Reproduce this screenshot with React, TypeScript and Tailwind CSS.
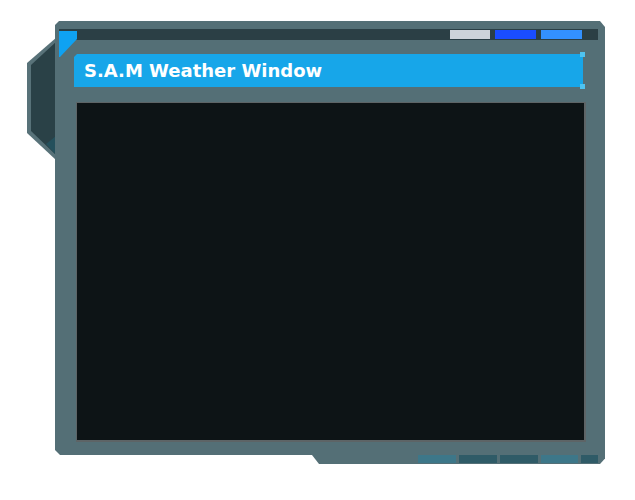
export default function App() {
  const slots = [
    { w: "w-[38px]", c: "bg-[#3d7789]" },
    { w: "w-[38px]", c: "bg-[#2f5b67]" },
    { w: "w-[38px]", c: "bg-[#2f5b67]" },
    { w: "w-[37px]", c: "bg-[#3d7789]" },
    { w: "w-[17px]", c: "bg-[#2f5b67]" },
  ]

  return (
    <div className="relative w-[635px] h-[500px] bg-white overflow-hidden">
      {/* Side hexagon */}
      <svg className="absolute left-[26px] top-[36px]" width="34" height="128" viewBox="0 0 34 128">
        <polygon points="31,1 1,27 1,97 30,124 34,124 34,1" fill="#587279" />
        <polygon points="31,5 5,29 5,95 30,119 34,119 34,5" fill="#2a4147" />
        <polygon points="20,108 30,100 30,119" fill="#24505c" />
      </svg>

      {/* Bottom tab */}
      <div className="absolute left-[312px] top-[450px] w-[293px] h-[14px] bg-[#546f76] [clip-path:polygon(0_0,100%_0,100%_60%,calc(100%-5px)_100%,7px_100%,0_35%)] flex justify-end gap-[3px] pt-[5px] pr-[7px]">
        {slots.map((s, i) => (
          <div key={i} className={`${s.w} h-[8px] ${s.c}`} />
        ))}
      </div>

      {/* Main frame */}
      <div className="relative ml-[55px] mt-[21px] w-[550px] h-[434px] bg-[#546f76] [clip-path:polygon(4px_0,calc(100%-5px)_0,100%_6px,100%_100%,5px_100%,0_calc(100%-5px),0_4px)] flex flex-col">
        {/* Top strip */}
        <div className="mt-[8px] ml-[4px] mr-[7px] h-[11px] bg-[#2b3f45] flex justify-end gap-[5px] py-[1px] pr-[16px]">
          <div className="w-[40px] bg-[#cdd3d9]" />
          <div className="w-[41px] bg-[#1a4dff]" />
          <div className="w-[41px] bg-[#3391ff]" />
        </div>

        {/* Blue corner mark */}
        <svg className="absolute left-[4px] top-[10px]" width="20" height="27" viewBox="0 0 20 27">
          <polygon points="0,0 18,0 18,8 1,26 0,26" fill="#0fa2f2" />
        </svg>

        {/* Title bar */}
        <div className="relative mt-[14px] ml-[19px] w-[509px] h-[33px] bg-[#17a6e9] [clip-path:polygon(3px_0,100%_0,100%_100%,0_100%,0_3px)] flex items-center pl-[10px]">
          <span className="text-white text-[18px] font-bold leading-none font-['DejaVu_Sans',sans-serif]">
            S.A.M Weather Window
          </span>
        </div>
        <div className="absolute left-[525px] top-[31px] w-[5px] h-[5px] bg-[#4fc3f0]" />
        <div className="absolute left-[525px] top-[63px] w-[5px] h-[5px] bg-[#4fc3f0]" />

        {/* Content area */}
        <div className="mt-[15px] ml-[21px] w-[510px] h-[340px] bg-[#0d1416] border-l border-t border-r-2 border-b-2 border-[#5d6466]" />
      </div>
    </div>
  )
}
